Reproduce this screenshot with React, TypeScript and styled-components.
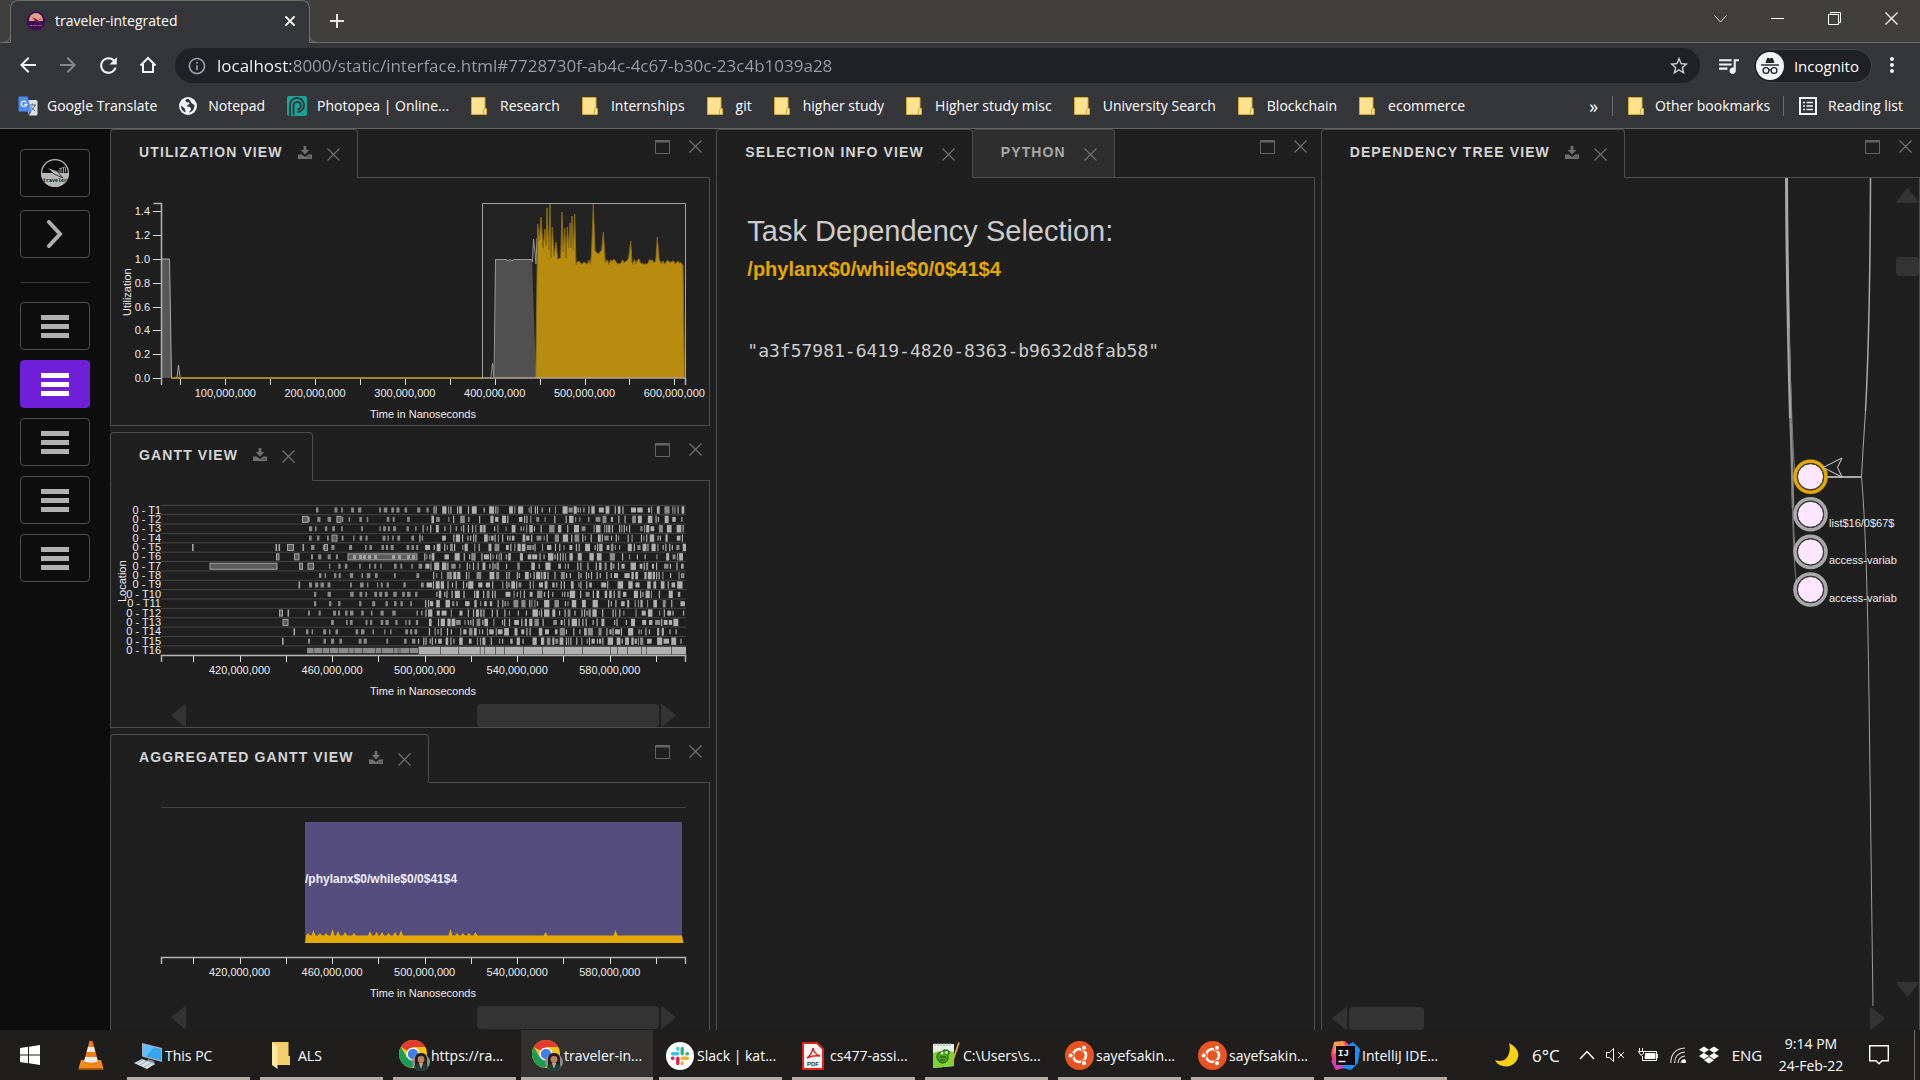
import React from "react";
import styled, { createGlobalStyle, css } from "styled-components";
import { MdArrowBack, MdArrowForward, MdRefresh, MdStarBorder, MdQueueMusic, MdInfoOutline, MdMoreVert } from "react-icons/md";
import { FaDropbox } from "react-icons/fa";

const ui = `"Open Sans", "Noto Sans", sans-serif`;
const page = `"Liberation Sans", Arial, sans-serif`;
const line = "#4d4d4d";
const gold = "#e5a800";

const Global = createGlobalStyle`
  *, *::before, *::after { box-sizing: border-box; }
  body { margin: 0; background: #1f1f1f; font-family: ${page}; }
  button { font: inherit; color: inherit; background: none; border: 0; padding: 0; cursor: pointer; }
  svg { display: block; flex: none; }
`;

/* ---------- shell ---------- */
const Screen = styled.div`
  display: flex;
  flex-direction: column;
  height: 100vh;
  overflow: hidden;
`;

const TitleBar = styled.header`
  display: flex;
  align-items: stretch;
  height: 43px;
  flex: none;
  background: #403f3c;
  box-shadow: inset 0 -1px #6c6c6b;
  padding-left: 10px;
  color: #fff;
  font: 14px ${ui};
`;
const BrowserTab = styled.div`
  position: relative;
  display: flex;
  align-items: center;
  width: 300px;
  padding: 0 14px 3px 15px;
  background: #35363a;
  border: 1px solid #6c6c6b;
  border-bottom: 0;
  border-radius: 8px 8px 0 0;
  &::before, &::after {
    content: "";
    position: absolute;
    bottom: 0;
    width: 10px;
    height: 10px;
    border-bottom: 1px solid #6c6c6b;
    clip-path: inset(0);
  }
  &::before { left: -10px; border-right: 1px solid #6c6c6b; border-bottom-right-radius: 8px; }
  &::after { right: -10px; border-left: 1px solid #6c6c6b; border-bottom-left-radius: 8px; }
`;
const TabTitle = styled.span`
  flex: 1;
  margin-left: 9px;
`;
const NewTab = styled.button`
  width: 54px;
  display: grid;
  place-items: center;
  padding-bottom: 2px;
`;
const WindowButtons = styled.div`
  margin-left: auto;
  display: flex;
`;
const WindowButton = styled.button`
  width: 57px;
  display: grid;
  place-items: center;
  padding-bottom: 6px;
`;

const Toolbar = styled.div`
  display: flex;
  align-items: center;
  flex: none;
  height: 40px;
  padding: 5px 8px 0 8px;
  background: #35363a;
  color: #fff;
`;
const ToolButton = styled.button<{ $dim?: boolean }>`
  width: 40px;
  height: 35px;
  display: grid;
  place-items: center;
  padding-bottom: 1px;
  color: ${(p) => (p.$dim ? "#87888b" : "#f1f3f4")};
`;
const Omnibox = styled.div`
  flex: 1;
  display: flex;
  align-items: center;
  height: 35px;
  margin: 0 9px 0 7px;
  padding: 0 10px 0 12px;
  border-radius: 18px;
  background: #202124;
  color: #9aa0a6;
`;
const Address = styled.input`
  flex: 1;
  min-width: 0;
  height: 30px;
  margin-left: 10px;
  padding: 0;
  border: 0;
  outline: 0;
  font: 17px ${ui};
  color: transparent;
  background: linear-gradient(90deg, #fff 74px, #9aa0a6 74px);
  -webkit-background-clip: text;
  background-clip: text;
`;
const Incognito = styled.button`
  display: flex;
  align-items: center;
  gap: 10px;
  height: 34px;
  margin-left: 4px;
  padding: 0 12px 0 2px;
  border: 1px solid #434447;
  border-radius: 17px;
  background: #202124;
  font: 15px ${ui};
`;

const Bookmarks = styled.nav`
  display: flex;
  align-items: center;
  flex: none;
  height: 46px;
  padding: 0 17px 0 18px;
  background: #35363a;
  border-bottom: 1px solid #616264;
  color: #fff;
  font: 14px ${ui};
`;
const Bookmark = styled.a<{ $gap?: number; $after?: number }>`
  display: flex;
  align-items: center;
  gap: ${(p) => p.$gap ?? 13}px;
  margin-right: ${(p) => p.$after ?? 22}px;
  color: inherit;
  text-decoration: none;
  white-space: nowrap;
`;
const BarRule = styled.span`
  width: 1px;
  height: 20px;
  margin-right: 15px;
  background: #6a6b6e;
`;
const More = styled.button`
  margin: 0 14px 0 auto;
  font-size: 18px;
`;

/* ---------- application ---------- */
const Workspace = styled.main`
  display: flex;
  flex: 1;
  min-height: 0;
  overflow: hidden;
  background: #1f1f1f;
  color: #ccc;
`;
const Sidebar = styled.aside`
  flex: none;
  width: 110px;
  padding: 20px;
  background: #0d0d0d;
`;
const SideGroup = styled.div<{ $gap: number }>`
  display: flex;
  flex-direction: column;
  gap: ${(p) => p.$gap}px;
`;
const SideRule = styled.hr`
  margin: 24px 0 19px;
  border: 0;
  border-top: 1px solid #333;
`;
const SideButton = styled.button<{ $active?: boolean }>`
  height: 48px;
  display: grid;
  place-items: center;
  border: 1px solid ${(p) => (p.$active ? "#701fd9" : line)};
  border-radius: 4px;
  background: ${(p) => (p.$active ? "#701fd9" : "transparent")};
  color: ${(p) => (p.$active ? "#fff" : "#b0b0b0")};
`;
const Columns = styled.div`
  flex: 1;
  display: grid;
  grid-template-columns: minmax(0, 600fr) minmax(0, 598fr) minmax(0, 599fr);
  gap: 6px;
  height: calc(100% + 1px);
`;
const Stack = styled.div`
  display: grid;
  grid-template-rows: repeat(3, minmax(0, 1fr));
  gap: 6px;
  min-height: 0;
`;
const PanelBox = styled.section`
  display: flex;
  flex-direction: column;
  min-width: 0;
  min-height: 0;
`;
const PanelHead = styled.div`
  display: flex;
  flex: none;
  height: 49px;
`;
const PanelTab = styled.div<{ $active: boolean; $wide: boolean }>`
  display: flex;
  align-items: center;
  gap: ${(p) => (p.$wide ? 18 : 15)}px;
  padding: 0 17px 3px 28px;
  border: 1px solid ${line};
  border-radius: 4px 4px 0 0;
  ${(p) =>
    p.$active
      ? css`
          border-bottom-color: transparent;
          color: #d4d4d4;
        `
      : css`
          background: #2e2e2e;
          border-left: 0;
          color: #a8a8a8;
        `}
`;
const PanelTitle = styled.h2`
  margin: 0;
  font-size: 14px;
  font-weight: bold;
  letter-spacing: 0.08em;
  text-transform: uppercase;
  white-space: nowrap;
`;
const IconButton = styled.button<{ $drop?: boolean }>`
  color: #707070;
  padding-top: ${(p) => (p.$drop ? 4 : 0)}px;
`;
const HeadFill = styled.div`
  flex: 1;
  display: flex;
  justify-content: flex-end;
  align-items: flex-start;
  gap: 19px;
  padding: 11px 8px 0 0;
  border-bottom: 1px solid ${line};
`;
const PanelBody = styled.div`
  flex: 1;
  min-height: 0;
  overflow: hidden;
  border: 1px solid ${line};
  border-top: 0;
`;
const Info = styled.div`
  padding: 24px 30px;
`;
const InfoTitle = styled.h1`
  margin: 0;
  font-size: 29px;
  line-height: 58px;
  font-weight: normal;
`;
const InfoName = styled.p`
  margin: 0 0 60px;
  font-size: 20px;
  line-height: 19px;
  font-weight: bold;
  color: ${gold};
`;
const InfoCode = styled.pre`
  margin: 0;
  font: 18px/24px "DejaVu Sans Mono", monospace;
`;

const ScrollRow = styled.div<{ $left: number; $right: number; $top?: number }>`
  display: flex;
  justify-content: space-between;
  gap: 2px;
  height: 23px;
  margin: ${(p) => p.$top ?? 4}px ${(p) => p.$right}px 0 ${(p) => p.$left}px;
  color: #333;
`;
const ScrollCol = styled.div`
  display: flex;
  flex-direction: column;
  align-items: center;
  width: 23px;
  padding: 10px 0 9px;
  color: #333;
`;
const Thumb = styled.div<{ $w: number; $h: number; $push?: boolean; $top?: number }>`
  width: ${(p) => p.$w}px;
  height: ${(p) => p.$h}px;
  margin: ${(p) => p.$top ?? 0}px ${(p) => (p.$push ? "0" : "auto")} ${(p) => (p.$top ? "auto" : "0")} ${(p) => (p.$push ? "auto" : "0")};
  border-radius: 4px;
  background: #333;
`;
const TreeWrap = styled.div`
  display: flex;
  justify-content: space-between;
`;
const TreeSvg = styled.svg`
  overflow: visible;
`;
const ChartText = styled.text`
  font: 11px ${page};
  fill: #ececec;
`;

/* ---------- taskbar ---------- */
const Taskbar = styled.footer`
  display: flex;
  flex: none;
  height: 50px;
  background: #1f1e1d;
  color: #fff;
  font: 15px ${ui};
`;
const PinButton = styled.button<{ $w: number }>`
  width: ${(p) => p.$w}px;
  display: grid;
  place-items: center;
`;
const Tasks = styled.div`
  display: flex;
  gap: 10px;
  margin-left: 5px;
`;
const Task = styled.button<{ $active?: boolean }>`
  display: flex;
  align-items: center;
  gap: 1px;
  width: 123px;
  padding: 4px 0 0 5px;
  border-bottom: 3px solid #b5aca6;
  white-space: nowrap;
  font-size: 14px;
  ${(p) =>
    p.$active &&
    css`
      width: 132px;
      margin: 0 -4px 0 -5px;
      padding-left: 10px;
      background: #33312f;
    `}
`;
const TaskIcon = styled.span`
  width: 32px;
  display: grid;
  place-items: center;
`;
const Tray = styled.div`
  display: flex;
  align-items: center;
  margin-left: auto;
`;
const TrayItem = styled.button<{ $w: number }>`
  width: ${(p) => p.$w}px;
  height: 50px;
  display: grid;
  place-items: center;
`;
const Temp = styled.span`
  width: 42px;
  font-size: 17px;
`;
const Clock = styled.time`
  width: 86px;
  text-align: center;
  font-size: 14px;
  line-height: 22px;
`;
const DesktopEdge = styled.span`
  width: 6px;
  height: 50px;
  border-left: 1px solid #6a6a69;
  margin-left: 10px;
`;

/* ---------- icons ---------- */
const Cross = ({ size = 13, width = 1.2 }: { size?: number; width?: number }) => (
  <svg width={size} height={size} viewBox="0 0 13 13" stroke="currentColor" strokeWidth={width} fill="none">
    <path d="M.5 .5 12.5 12.5M12.5 .5 .5 12.5" />
  </svg>
);
const Download = () => (
  <svg width="14" height="13" viewBox="0 0 14 13" fill="currentColor">
    <path d="M5.6 0h2.8v4h2.9L7 8.4 2.7 4h2.9z" />
    <path d="M0 8.6h3.6L7 11l3.4-2.4H14V13H0z" />
    <path d="M9.3 11h1M11.4 11h1" stroke="#222" />
  </svg>
);
const Maximise = () => (
  <svg width="15" height="14" viewBox="0 0 15 14" fill="none" stroke="#646464">
    <path d="M.5 .5h14v13H.5z" />
    <path d="M0 1.5h15" strokeWidth="2" />
  </svg>
);
const Triangle = ({ dir }: { dir: "left" | "right" | "up" | "down" }) => {
  const flat = dir === "left" || dir === "right";
  const d = {
    left: "M15 2v19q0 3-2 1L1 12.5q-1-1 0-2L13 1q2-2 2 1z",
    right: "M0 2v19q0 3 2 1L14 12.5q1-1 0-2L2 1Q0-1 0 2z",
    up: "M2 15h19q3 0 1-2L12.5 1q-1-1-2 0L1 13q-2 2 1 2z",
    down: "M2 0h19q3 0 1 2L12.5 14q-1 1-2 0L1 2Q-1 0 2 0z",
  }[dir];
  return (
    <svg width={flat ? 15 : 23} height={flat ? 23 : 15} fill="currentColor">
      <path d={d} />
    </svg>
  );
};
const Bars = () => (
  <svg width="28" height="23" fill="currentColor">
    <path d="M0 0h28v5H0zM0 9h28v5H0zM0 18h28v5H0z" />
  </svg>
);
const TravelerMark = () => (
  <svg width="28" height="28" viewBox="0 0 28 28">
    <path d="M0 14a14 14 0 0 0 28 0z" fill="#b8b8b8" />
    <circle cx="14" cy="14" r="13.4" fill="none" stroke="#b8b8b8" strokeWidth="1.2" />
    <path d="M6 8.5 16 12l6 7-9-4z" fill="#b8b8b8" stroke="#0d0d0d" strokeWidth=".7" />
    <path d="M18 11v3M20 9v5M22.5 9v5M24.5 8.5V13M18 10l6-2" stroke="#999" fill="none" />
    <text x="14" y="23" textAnchor="middle" fontFamily="Liberation Mono, monospace" fontWeight="bold" fontSize="5" fill="#0d0d0d">traveler</text>
  </svg>
);
const Favicon = () => (
  <svg width="20" height="20" viewBox="0 0 20 20">
    <circle cx="10" cy="10" r="9.5" fill="#3a1155" />
    <path d="M3 10a7 8 0 0 1 14 0z" fill="#e7a08a" />
    <path d="M6 6l6 3 3 4-6-3z" fill="#7b1f49" />
    <path d="M13 8h4M4 14.5h12" stroke="#c9566b" strokeDasharray="2 .6" />
  </svg>
);
const Folder = () => (
  <svg width="16" height="18" viewBox="0 0 16 18">
    <path d="M.5 .5h13.5v11h1.5v6H.5z" fill="#ffe391" stroke="#d6aa2c" />
    <path d="M12.5 17v-4q0-1.5 1.5-1.5" fill="none" stroke="#d6aa2c" />
  </svg>
);
const Translate = () => (
  <svg width="20" height="20" viewBox="0 0 20 20">
    <path d="M7 4h11q1.5 0 1.5 1.5v12.5q0 1.5-1.5 1.5h-7z" fill="#dcdee0" />
    <path d="M11.5 9h6.5M14.7 7.5V9M17 9q-.6 3.5-4.5 6M13 10.5q1 3 4.5 4.5" stroke="#5c6b77" fill="none" />
    <path d="M1.5 .5h8l4 15H1.5Q.5 15.5 .5 14.5v-13Q.5 .5 1.5 .5z" fill="#4d8cf5" />
    <path d="M11 15.5h2.5L11 19.5z" fill="#2f62c4" />
    <path d="M8.3 6.3A2.7 2.7 0 1 0 8.7 8.3H6.3" stroke="#fff" strokeWidth="1.2" fill="none" />
  </svg>
);
const Globe = () => (
  <svg width="18" height="18" viewBox="0 0 18 18">
    <circle cx="9" cy="9" r="9" fill="#f1f3f4" />
    <path d="M9.5 1.8C6 2 6 4 7.5 5c1 .8 3-.2 3 1.5 0 1.3-2.5 1-2.5 2.5 1 1.3 4 .5 4 3-.3 1.5-1.5 2-1.700 3.600A7 7 0 0 0 15.500 8L13 6.500z" fill="#35363a" />
    <path d="M2 8.5l3.5 2.7c1 1 .5 3 1.5 4.3A7 7 0 0 1 2 8.5z" fill="#35363a" />
  </svg>
);
const Photopea = () => (
  <svg width="20" height="20" viewBox="0 0 20 20">
    <rect width="20" height="20" rx="2" fill="#18a497" />
    <path d="M3 20V9.5a7 7 0 1 1 7.500 6.500M6.500 19V10a3.700 3.700 0 1 1 4 3.300" fill="none" stroke="#30373a" strokeWidth="1.900" />
  </svg>
);
const ReadingList = () => (
  <svg width="18" height="18" viewBox="0 0 18 18" fill="none" stroke="#f1f3f4">
    <rect x="1" y="1" width="16" height="16" strokeWidth="2" />
    <path d="M4 5.5h2M4 9h2M4 12.5h2M7.5 5.5H14M7.5 9H14M7.5 12.5H14" strokeWidth="1.6" />
  </svg>
);
const HomeIcon = () => (
  <svg width="18" height="18" viewBox="0 0 18 18" fill="none" stroke="currentColor" strokeWidth="2">
    <path d="M1.5 9.5 9 2l7.5 7.5M4 8v8h10V8" />
  </svg>
);
const Spy = () => (
  <svg width="28" height="28" viewBox="0 0 28 28">
    <circle cx="14" cy="14" r="14" fill="#f1f3f4" />
    <path d="M9.5 11 11 6.5q.4-1 1.5-.6l1.5.5 1.5-.5q1.1-.4 1.5.6l1.5 4.5z" fill="#202124" />
    <path d="M5 13h18" stroke="#202124" strokeWidth="1.4" />
    <g fill="none" stroke="#202124" strokeWidth="1.3">
      <circle cx="10" cy="18.5" r="2.9" />
      <circle cx="18" cy="18.5" r="2.9" />
      <path d="M12.9 18q1.1-.8 2.2 0" />
    </g>
  </svg>
);
const WindowsLogo = () => (
  <svg width="20" height="20" viewBox="0 0 20 20" fill="#fff">
    <path d="M0 3 8 1.8v7.7H0zM9 1.7 20 0v9.5H9zM0 10.5h8v7.7L0 17zM9 10.5h11V20L9 18.3z" />
  </svg>
);
const Vlc = () => (
  <svg width="26" height="29" viewBox="0 0 26 29">
    <path d="M3 19h20l2.5 8.5H.5z" fill="#f28a1c" />
    <path d="M.5 27.5h25v1.3H.5z" fill="#c45f08" />
    <path d="M11.5 0h3l6 22q-7.5 4-15 0z" fill="#f47b10" />
    <path d="M10 6h6l1.4 5H8.6zM7.3 16h11.4l1.2 4.5q-7 2.5-13.8 0z" fill="#ececec" />
  </svg>
);
const ThisPc = () => (
  <svg width="28" height="26" viewBox="0 0 28 26">
    <path d="M8 0 28 5v14L8 13.5z" fill="#9fb4c4" />
    <path d="M9 1.5 27 6v11.5L9 12.5z" fill="#38a6ee" />
    <path d="M9 1.5 20 4.2 12 13.3 9 12.5z" fill="#64c0fa" />
    <path d="M14 16l6 2 1 4-8-3z" fill="#7f929f" />
    <path d="M0 20 8 16l13 5-8 5z" fill="#d8e0e6" />
    <path d="M3 20l6-3M6 22l7-4M10 24l7-4" stroke="#93a2ad" strokeWidth=".8" />
  </svg>
);
const Explorer = () => (
  <svg width="18" height="27" viewBox="0 0 18 27">
    <path d="M0 0h16.5v14H18v9H5z" fill="#f3cf69" />
    <path d="M0 0l5.5 4v23L0 23z" fill="#ffe7a0" />
  </svg>
);
const Chrome = () => (
  <svg width="31" height="31" viewBox="0 0 31 31">
    <circle cx="14" cy="14" r="14" fill="#fbc116" />
    <path d="M14 14 1.9 7A14 14 0 0 1 26.2 7H14z" fill="#e23c2e" />
    <path d="M14 14 7.9 17.5 1.9 7A14 14 0 0 0 13 28l5-10z" fill="#1c9d55" />
    <circle cx="14" cy="14" r="6.6" fill="#fff" />
    <circle cx="14" cy="14" r="5.2" fill="#3f80ee" />
    <circle cx="22" cy="22" r="9" fill="#8b8f8c" />
    <path d="M16 27V18q1-5 6-5t6 5v9z" fill="#2a1d1a" />
    <circle cx="22" cy="19.5" r="3.4" fill="#b9826a" />
    <path d="M15 27q2-4 7-4t7 4q-3 4-7 4t-7-4z" fill="#1c4037" />
    <path d="M20 23h4l-2 6z" fill="#d9a48d" />
  </svg>
);
const Slack = () => (
  <svg width="28" height="28" viewBox="0 0 28 28">
    <circle cx="14" cy="14" r="14" fill="#fff" />
    <g strokeWidth="3.4" strokeLinecap="round">
      <path d="M11.8 6.500v.5M6.500 11.800h5.300" stroke="#36c5f0" />
      <path d="M16.200 6.500v5.300M21.500 11.800h-.5" stroke="#2eb67d" />
      <path d="M16.200 16.200h5.300M16.200 21v.5" stroke="#ecb22e" />
      <path d="M11.800 16.200v5.300M6.500 16.200h.5" stroke="#e01e5a" />
    </g>
  </svg>
);
const Pdf = () => (
  <svg width="22" height="28" viewBox="0 0 22 28">
    <path d="M1 1h14l6 6v20H1z" fill="#f7f5f5" stroke="#e2221c" strokeWidth="2" strokeLinejoin="round" />
    <path d="M5 16q5-4 6-10 1 6 7 8-7-1-13 2z" fill="none" stroke="#e2221c" strokeWidth="1.5" />
    <text x="11" y="24" textAnchor="middle" fontFamily="Liberation Sans, sans-serif" fontWeight="bold" fontSize="6" fill="#333">PDF</text>
  </svg>
);
const NotepadPP = () => (
  <svg width="28" height="27" viewBox="0 0 28 27">
    <path d="M1 2h21v22L1 26z" fill="#e8efe4" />
    <path d="M1 11q10-4 21-1v14L1 26z" fill="#7ed233" />
    <path d="M3 1v3M6 1v3M9 1v3M12 1v3M15 1v3M18 1v3" stroke="#9aa" />
    <path d="M5 15q0-5 5-5 1-3 4-2 4 0 3 4-2 1-1 4 0 4-5 5-5 0-6-6z" fill="#4da322" stroke="#1c4b0d" />
    <path d="M8 15h6M8 18h5" stroke="#1c4b0d" />
    <circle cx="10" cy="11" r="1.3" fill="#eaf7d0" />
    <circle cx="14.5" cy="10.5" r="1.3" fill="#eaf7d0" />
    <path d="M27 .5 21 18l-.5 2" stroke="#e0a32a" strokeWidth="1.8" fill="none" />
  </svg>
);
const Ubuntu = () => (
  <svg width="29" height="29" viewBox="0 0 29 29">
    <circle cx="14.5" cy="14.5" r="14.5" fill="#e95420" />
    <circle cx="14.5" cy="14.5" r="6.5" fill="none" stroke="#fff" strokeWidth="2.6" />
    <g fill="#fff" stroke="#e95420" strokeWidth="1.2">
      <circle cx="5.7" cy="14.5" r="2.7" />
      <circle cx="19" cy="6.8" r="2.7" />
      <circle cx="19" cy="22.2" r="2.7" />
    </g>
  </svg>
);
const IntelliJ = () => (
  <svg width="29" height="29" viewBox="0 0 29 29">
    <path d="M3 1 14 0l6 6-3 20-12 3-3-6L0 12z" fill="#fc3e6f" />
    <path d="M3 1l9-1 3 6L2 13z" fill="#fc9a4b" />
    <path d="M17 4l5-3 7 7-2 14-7 7-9-2z" fill="#1a8ef3" />
    <path d="M0 20l5 9 7-3-6-8z" fill="#d73fc4" />
    <rect x="5" y="5" width="19" height="19" fill="#120a10" />
    <path d="M7.5 20.5h7" stroke="#fff" strokeWidth="1.4" />
    <text x="7" y="14.5" fontFamily="Liberation Mono, monospace" fontWeight="bold" fontSize="9" fill="#fff">IJ</text>
  </svg>
);

/* ---------- charts ---------- */
const makeRandom = (seed: number) => () => {
  seed = (seed * 1103515245 + 12345) % 2147483648;
  return seed / 2147483648;
};
const RIGHT = 575;

const noisy = (from: number, to: number, base: number, amp: number, rnd: () => number) => {
  const out: [number, number][] = [];
  for (let x = from; x < to; x += 1.5) out.push([x, base + (rnd() - 0.5) * amp]);
  return out;
};
const toPath = (pts: [number, number][]) => "M" + pts.map(([x, y]) => `${x.toFixed(1)} ${y.toFixed(1)}`).join("L");

const utilisation = (() => {
  const rnd = makeRandom(7);
  const pts: [number, number][] = [
    [424.7, 200], [426.7, 46], [428.3, 63], [430, 39], [432, 70], [434, 51], [435, 68], [436, 30], [437.7, 72],
    [439, 26], [440, 80], [441.3, 49], [443, 78], [445, 64], [446.7, 81], [449.7, 80], [451, 34], [452.3, 74],
    [453.7, 50], [455, 80], [456.3, 49], [457.7, 70], [459, 45], [460, 70], [461, 38], [462.3, 72], [463.7, 36], [465, 87],
    ...noisy(466, 480, 84, 5, rnd),
    [480.7, 72], [482.3, 26], [484, 73], [487.3, 76], [490.7, 72], [492.3, 54], [494.3, 85],
    ...noisy(495, 517, 84, 5, rnd),
    [517.7, 80], [519.7, 63], [521, 84],
    ...noisy(522, 545, 84, 6, rnd),
    [545, 80], [546.3, 59], [548.3, 83],
    ...noisy(549, 571, 84, 6, rnd),
    [572, 88], [573.5, 200],
  ];
  return toPath(pts);
})();

const Utilization = () => (
  <svg width="597" height="246">
    <path d="M50 200V81H58.5L60.5 200z" fill="#575757" />
    <path d="M50 81H58.5L60.5 199.5H66L67.5 187 69 199.5" fill="none" stroke="#a8a8a8" />
    <path d="M60 200H372" stroke="#a8842f" strokeWidth="2" />
    <rect x="371.5" y="25.5" width="203" height="174" fill="#232323" />
    <path d="M384 200V81.5H421L425 200z" fill="#505050" />
    <path d="M380 199.5 381.5 185 383 199.5 384.5 81.5H395L397 83 399 81.5 401 83 403 81.5H420.5L421.5 84 422.5 61 424 74 425 86 426 60" fill="none" stroke="#999" />
    <path d={utilisation + "z"} fill="#b88d0f" />
    <path d={utilisation} fill="none" stroke="#8a6910" />
    <path d="M371.5 199.5V25.5H574.5V199.5" fill="none" stroke="#a5a5a5" />
    <path d="M371 200H575" stroke="#b9a58f" strokeWidth="1.5" />
    <path d="M42.5 25.5H50.5V207M574.5 200V207" fill="none" stroke="#b5b5b5" strokeWidth="1.5" />
    {[0, 1, 2, 3, 4, 5, 6, 7].map((i) => {
      const y = 200 - i * 23.8;
      return (
        <g key={i}>
          <path d={`M42 ${Math.round(y) + 0.5}h8`} stroke="#ddd" />
          <ChartText x="39" y={Math.round(y) + 4} textAnchor="end">{(i * 0.2).toFixed(1)}</ChartText>
        </g>
      );
    })}
    {Array.from({ length: 12 }, (_, i) => {
      const x = 69.4 + i * 44.9;
      return (
        <g key={i}>
          <path d={`M${Math.round(x) + 0.5} 201v6`} stroke="#ddd" />
          {i % 2 === 1 && (
            <ChartText x={x} y="219" textAnchor="middle">{`${(i + 1) / 2}00,000,000`}</ChartText>
          )}
        </g>
      );
    })}
    <ChartText x="312" y="240" textAnchor="middle">Time in Nanoseconds</ChartText>
    <ChartText transform="translate(20 138) rotate(-90)">Utilization</ChartText>
  </svg>
);

const TimeAxis = () => (
  <>
    <path d="M50.5 181V174.5H574.5V181" fill="none" stroke="#b5b5b5" strokeWidth="1.5" />
    {Array.from({ length: 11 }, (_, i) => {
      const x = 82.3 + i * 46.27;
      return (
        <g key={i}>
          <path d={`M${Math.round(x) + 0.5} 175v6`} stroke="#ddd" />
          {i % 2 === 1 && (
            <ChartText x={x} y="193" textAnchor="middle">{`${400 + i * 20},000,000`}</ChartText>
          )}
        </g>
      );
    })}
    <ChartText x="312" y="214" textAnchor="middle">Time in Nanoseconds</ChartText>
  </>
);

type Bar = { row: number; x: number; w: number; tone: string; h: number };
const ganttBars: Bar[] = (() => {
  const rnd = makeRandom(42);
  const out: Bar[] = [];
  const starts = [205, 197, 198, 198, 200, 200, 218, 208, 198, 203, 203, 197, 220, 195, 197];
  starts.forEach((start, row) => {
    let x = start;
    while (x < RIGHT - 2) {
      const dense = x > 306 + rnd() * 12;
      const w = dense ? (rnd() < 0.55 ? 1.2 : 2 + rnd() * 3.5) : 1.2 + rnd() * 2.4;
      out.push({ row, x, w: Math.min(w, RIGHT - x), tone: dense ? (rnd() < 0.75 ? "#b0b0b0" : "#8a8a8a") : "#8a8a8a", h: dense && rnd() < 0.65 ? 7.4 : 5 });
      x += w + (dense ? 0.8 + rnd() * rnd() * 11 : 2 + rnd() * rnd() * 22);
    }
  });
  for (let x = 196; x < RIGHT; ) {
    const dense = x > 305;
    const w = dense ? 4 + rnd() * 24 : 1 + rnd() * 12;
    out.push({ row: 15, x, w: Math.min(w, RIGHT - x), tone: dense ? "#b0b0b0" : "#8a8a8a", h: dense ? 7.6 : 5.4 });
    x += w + 0.5;
  }
  return out;
})();
/* Long-running tasks: row, start, width. */
const boxes: [number, number, number][] = [
  [6, 99, 67], [4, 81.5, 0.6], [4, 165, 0.6], [4, 168, 0.6], [4, 176.5, 6], [5, 165.5, 2.5], [5, 183.5, 4.5],
  [1, 191.5, 5.5], [6, 188.5, 3], [6, 197, 5.5], [11, 168.5, 3], [11, 177, 0.6], [12, 172, 5], [13, 183, 0.6],
  [14, 171.5, 0.6], [8, 188, 0.6], [4, 192, 0.6], [3, 221, 5], [1, 226, 4], [4, 213.5, 3], [5, 237, 69],
];
const Gantt = () => (
  <svg width="597" height="219">
    {Array.from({ length: 17 }, (_, i) => (
      <path key={i} d={`M50 ${24.3 + i * 9.37}H575`} stroke="#454545" />
    ))}
    {ganttBars.map((b, i) => (
      <rect key={i} x={b.x} y={29 + b.row * 9.37 - b.h / 2} width={b.w} height={b.h} fill={b.tone} />
    ))}
    {boxes.map(([row, x, w], i) => (
      <rect key={i} x={x} y={26 + row * 9.37} width={w} height="6" fill="#5c5c5c" stroke="#a5a5a5" />
    ))}
    {[242, 248, 252, 257, 263, 281, 287, 296, 301].map((x) => (
      <rect key={x} x={x} y="74" width="3" height="4" fill="#a0a0a0" />
    ))}
    {Array.from({ length: 16 }, (_, i) => (
      <ChartText key={i} x="50" y={32.5 + i * 9.37} textAnchor="end">{`0 - T${i + 1}`}</ChartText>
    ))}
    <ChartText transform="translate(15 121) rotate(-90)">Location</ChartText>
    <TimeAxis />
  </svg>
);

const Aggregated = () => {
  const peaks = [[197, 151], [202.5, 148], [209, 151], [215, 151], [221.5, 147], [227, 149], [234, 150], [243, 151], [259, 149], [265.5, 150], [271, 150], [277.5, 151], [284, 150], [290, 148], [339.5, 147], [346, 151], [352, 151], [358, 151], [364.5, 150], [434.5, 150], [504.5, 148]];
  const top = peaks.map(([x, y]) => `L${x - 2} 152.5L${x} ${y - 1}L${x + 2} 152.5`).join("");
  return (
    <svg width="597" height="219">
      <path d="M50 24.5H575" stroke="#444" />
      <rect x="194" y="39" width="377" height="121" fill="#544d7d" />
      <path d={`M194 160L195 153${top}L571 152.5L572.5 160z`} fill="#e5a805" />
      <text x="194" y="100" fontFamily="Liberation Sans, Arial, sans-serif" fontSize="12" fontWeight="bold" fill="#f2f0fa">
        /phylanx$0/while$0/0$41$4
      </text>
      <TimeAxis />
    </svg>
  );
};

const nodes = ["", "list$16/0$67$", "access-variab", "access-variab"];
const Tree = () => (
  <TreeSvg width="574" height="828">
    <g fill="none" stroke="#a9a9a9">
      <path d="M464.5 0Q465 110 468.5 240" strokeWidth="3" />
      <path d="M468.5 240Q470 280 471 330" strokeWidth="2.5" stroke="#8f8f8f" />
      <path d="M467 150Q470 260 473 299M470 310Q471 340 473 374M470.5 320Q471 380 475 412" strokeWidth="1" stroke="#7a7a7a" />
      <path d="M548.5 0Q548 150 543.5 233" strokeWidth="1.5" />
      <path d="M543.5 233Q541 270 539.5 299" strokeWidth="1" />
      <path d="M539.5 299Q545 360 547 520L551 828" strokeWidth="1" stroke="#9c9c9c" />
      <path d="M502 299H539.5" strokeWidth="2" />
    </g>
    {nodes.map((label, i) => (
      <g key={i}>
        <circle cx="488.5" cy={298.7 + i * 37.6} r="15.5" fill="#1f1f1f" stroke={i === 0 ? gold : "#a9a9a9"} strokeWidth="3.6" />
        <circle cx="488.5" cy={298.7 + i * 37.6} r="13" fill="#fde6ff" stroke="#333" />
        {label && <ChartText x="507" y={311 + i * 37.6}>{label}</ChartText>}
      </g>
    ))}
    <path d="M501 289.5 520 280 515.5 289.5 520 299z" fill="#222" stroke="#d5d5d5" />
  </TreeSvg>
);

/* ---------- composition ---------- */
type TabSpec = { title: string; download?: boolean };
const Panel = ({ tabs, children }: { tabs: TabSpec[]; children: React.ReactNode }) => (
  <PanelBox>
    <PanelHead>
      {tabs.map((tab, i) => (
        <PanelTab key={tab.title} $active={i === 0} $wide={!tab.download}>
          <PanelTitle>{tab.title}</PanelTitle>
          {tab.download && <IconButton aria-label={`Download ${tab.title}`}><Download /></IconButton>}
          <IconButton $drop aria-label={`Close ${tab.title}`}><Cross /></IconButton>
        </PanelTab>
      ))}
      <HeadFill>
        <IconButton aria-label="Maximise"><Maximise /></IconButton>
        <IconButton aria-label="Close"><Cross /></IconButton>
      </HeadFill>
    </PanelHead>
    <PanelBody>{children}</PanelBody>
  </PanelBox>
);
const ChartScroll = () => (
  <ScrollRow $left={60} $right={33}>
    <Triangle dir="left" />
    <Thumb $w={182} $h={23} $push />
    <Triangle dir="right" />
  </ScrollRow>
);

const folders = ["Research", "Internships", "git", "higher study", "Higher study misc", "University Search", "Blockchain", "ecommerce"];
const tasks: [React.ReactNode, string][] = [
  [<ThisPc />, "This PC"],
  [<Explorer />, "ALS"],
  [<Chrome />, "https://ra..."],
  [<Chrome />, "traveler-in..."],
  [<Slack />, "Slack | kat..."],
  [<Pdf />, "cs477-assi..."],
  [<NotepadPP />, "C:\\Users\\s..."],
  [<Ubuntu />, "sayefsakin..."],
  [<Ubuntu />, "sayefsakin..."],
  [<IntelliJ />, "IntelliJ IDE..."],
];

export default function App() {
  return (
    <Screen>
      <Global />
      <TitleBar>
        <BrowserTab>
          <Favicon />
          <TabTitle>traveler-integrated</TabTitle>
          <button aria-label="Close tab"><Cross size={10} width={2.5} /></button>
        </BrowserTab>
        <NewTab aria-label="New tab">
          <svg width="14" height="14" stroke="#e8e8e8" strokeWidth="2"><path d="M7 0v14M0 7h14" /></svg>
        </NewTab>
        <WindowButtons>
          <WindowButton aria-label="Search tabs">
            <svg width="13" height="8" fill="none" stroke="#ddd"><path d="M.5 .5 6.5 7l6-6.5" /></svg>
          </WindowButton>
          <WindowButton aria-label="Minimise">
            <svg width="13" height="1"><path d="M0 .5h13" stroke="#fff" /></svg>
          </WindowButton>
          <WindowButton aria-label="Restore">
            <svg width="13" height="13" fill="none" stroke="#fff"><path d="M.5 2.5h10v10H.5zM2.5 2.5v-2h10v10h-2" /></svg>
          </WindowButton>
          <WindowButton aria-label="Close window"><Cross /></WindowButton>
        </WindowButtons>
      </TitleBar>
      <Toolbar>
        <ToolButton aria-label="Back"><MdArrowBack size={24} /></ToolButton>
        <ToolButton $dim aria-label="Forward"><MdArrowForward size={24} /></ToolButton>
        <ToolButton aria-label="Reload"><MdRefresh size={25} /></ToolButton>
        <ToolButton aria-label="Home"><HomeIcon /></ToolButton>
        <Omnibox>
          <MdInfoOutline size={20} />
          <Address aria-label="Address" defaultValue="localhost:8000/static/interface.html#7728730f-ab4c-4c67-b30c-23c4b1039a28" />
          <MdStarBorder size={22} color="#c7c9cc" />
        </Omnibox>
        <ToolButton aria-label="Media"><MdQueueMusic size={25} /></ToolButton>
        <Incognito><Spy />Incognito</Incognito>
        <ToolButton aria-label="Menu"><MdMoreVert size={24} /></ToolButton>
      </Toolbar>
      <Bookmarks>
        <Bookmark href="#" $gap={9}><Translate />Google Translate</Bookmark>
        <Bookmark href="#" $gap={11}><Globe />Notepad</Bookmark>
        <Bookmark href="#" $gap={10}><Photopea />Photopea | Online...</Bookmark>
        {folders.map((name) => (
          <Bookmark href="#" key={name}><Folder />{name}</Bookmark>
        ))}
        <More aria-label="More bookmarks">»</More>
        <BarRule />
        <Bookmark href="#" $gap={11} $after={13}><Folder />Other bookmarks</Bookmark>
        <BarRule />
        <Bookmark href="#" $gap={11} $after={0}><ReadingList />Reading list</Bookmark>
      </Bookmarks>

      <Workspace>
        <Sidebar>
          <SideGroup $gap={13}>
            <SideButton aria-label="Traveler"><TravelerMark /></SideButton>
            <SideButton aria-label="Expand">
              <svg width="18" height="28" fill="none" stroke="currentColor" strokeWidth="4" strokeLinecap="round"><path d="M3 2 14 14 3 26" /></svg>
            </SideButton>
          </SideGroup>
          <SideRule />
          <SideGroup $gap={10}>
            {[0, 1, 2, 3, 4].map((i) => (
              <SideButton key={i} $active={i === 1} aria-label={`Dataset ${i + 1}`}><Bars /></SideButton>
            ))}
          </SideGroup>
        </Sidebar>
        <Columns>
          <Stack>
            <Panel tabs={[{ title: "Utilization View", download: true }]}><Utilization /></Panel>
            <Panel tabs={[{ title: "Gantt View", download: true }]}><Gantt /><ChartScroll /></Panel>
            <Panel tabs={[{ title: "Aggregated Gantt View", download: true }]}><Aggregated /><ChartScroll /></Panel>
          </Stack>
          <Panel tabs={[{ title: "Selection Info View" }, { title: "Python" }]}>
            <Info>
              <InfoTitle>Task Dependency Selection:</InfoTitle>
              <InfoName>/phylanx$0/while$0/0$41$4</InfoName>
              <InfoCode>"a3f57981-6419-4820-8363-b9632d8fab58"</InfoCode>
            </Info>
          </Panel>
          <Panel tabs={[{ title: "Dependency Tree View", download: true }]}>
            <TreeWrap>
              <Tree />
              <ScrollCol>
                <Triangle dir="up" />
                <Thumb $w={23} $h={19} $top={54} />
                <Triangle dir="down" />
              </ScrollCol>
            </TreeWrap>
            <ScrollRow $left={10} $right={34} $top={1}>
              <Triangle dir="left" />
              <Thumb $w={75} $h={23} />
              <Triangle dir="right" />
            </ScrollRow>
          </Panel>
        </Columns>
      </Workspace>

      <Taskbar>
        <PinButton $w={60} aria-label="Start"><WindowsLogo /></PinButton>
        <PinButton $w={62} aria-label="VLC"><Vlc /></PinButton>
        <Tasks>
          {tasks.map(([icon, name], i) => (
            <Task key={i} $active={i === 3}><TaskIcon>{icon}</TaskIcon>{name}</Task>
          ))}
        </Tasks>
        <Tray>
          <TrayItem $w={50} aria-label="Weather">
            <svg width="24" height="24"><path d="M14 0q13 7 8 17-5 8-14 6-6-1-8-6 9 3 13-4 3-6 1-13z" fill="#fcd116" /></svg>
          </TrayItem>
          <Temp>6°C</Temp>
          <TrayItem $w={26} aria-label="Hidden icons">
            <svg width="16" height="10" fill="none" stroke="#fff" strokeWidth="1.5"><path d="M1 9 8 1.5 15 9" /></svg>
          </TrayItem>
          <TrayItem $w={32} aria-label="Volume">
            <svg width="20" height="16" fill="none" stroke="#fff"><path d="M.5 5.5h3l4-4v13l-4-4h-3zM12 5l6 6M18 5l-6 6" /></svg>
          </TrayItem>
          <TrayItem $w={32} aria-label="Battery">
            <svg width="21" height="14" fill="none" stroke="#fff"><path d="M6 3.5h12.5v9h-14V8M19.5 6v4M1.5 0v3M4.5 0v3M.5 3.5h5v2l-2.5 2z" /><path d="M7.5 5.5H17v5H7z" fill="#fff" /></svg>
          </TrayItem>
          <TrayItem $w={28} aria-label="Network">
            <svg width="16" height="16" fill="none" stroke="#fff" strokeWidth="1.1"><path d="M.8 16Q1 2 15 1M4.5 16Q5 6 15 5M8 16q.5-6 7-7M11 16q0-3 4-3.5" opacity=".85" /><circle cx="14" cy="14.5" r="1.5" fill="#fff" /></svg>
          </TrayItem>
          <TrayItem $w={34} aria-label="Dropbox"><FaDropbox size={20} /></TrayItem>
          <TrayItem $w={42} aria-label="Language">ENG</TrayItem>
          <Clock>9:14 PM<br />24-Feb-22</Clock>
          <TrayItem $w={50} aria-label="Notifications">
            <svg width="20" height="20" fill="none" stroke="#fff" strokeWidth="1.4"><path d="M.7 .7h18.6v15H13L10 18.7 7 15.7H.7z" /></svg>
          </TrayItem>
          <DesktopEdge />
        </Tray>
      </Taskbar>
    </Screen>
  );
}
